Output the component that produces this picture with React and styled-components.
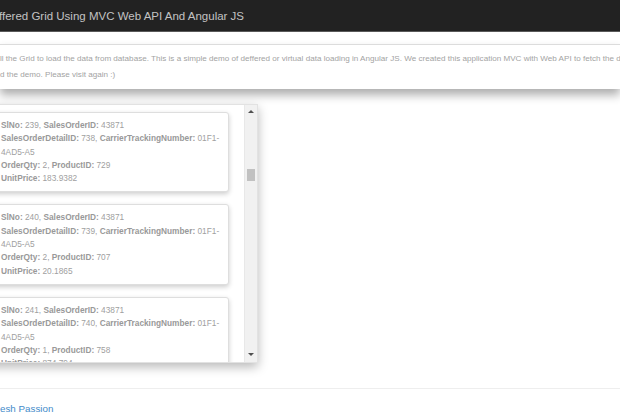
import styled, { createGlobalStyle } from 'styled-components';

const records = [
  { slNo: 239, orderId: 43871, detailId: 738, tracking: '01F1-4AD5-A5', qty: 2, productId: 729, price: '183.9382' },
  { slNo: 240, orderId: 43871, detailId: 739, tracking: '01F1-4AD5-A5', qty: 2, productId: 707, price: '20.1865' },
  { slNo: 241, orderId: 43871, detailId: 740, tracking: '01F1-4AD5-A5', qty: 1, productId: 758, price: '874.794' },
];

export default function App() {
  return (
    <>
      <GlobalStyle />
      <Navbar>
        <Brand>ffered Grid Using MVC Web API And Angular JS</Brand>
      </Navbar>
      <Main>
        <Intro>
          <IntroLine>
            ll the Grid to load the data from database. This is a simple demo of deffered or virtual data loading in
            Angular JS. We created this application MVC with Web API to fetch the data.
          </IntroLine>
          <IntroLine>d the demo. Please visit again :)</IntroLine>
        </Intro>
        <ScrollBox>
          <CardList>
            {records.map(r => (
              <Card key={r.slNo}>
                <b>SlNo:</b> {r.slNo}, <b>SalesOrderID:</b> {r.orderId}
                <br />
                <b>SalesOrderDetailID:</b> {r.detailId}, <b>CarrierTrackingNumber:</b> {r.tracking}
                <br />
                <b>OrderQty:</b> {r.qty}, <b>ProductID:</b> {r.productId}
                <br />
                <b>UnitPrice:</b> {r.price}
              </Card>
            ))}
          </CardList>
          <Scrollbar>
            <Arrow />
            <Thumb />
            <Arrow $down />
          </Scrollbar>
        </ScrollBox>
        <Footer>
          <FooterLink href="#">esh Passion</FooterLink>
        </Footer>
      </Main>
    </>
  );
}

const GlobalStyle = createGlobalStyle`
  body {
    margin: 0;
    overflow: hidden;
    background: #fff;
    font-family: "Liberation Sans", Arial, sans-serif;
  }
`;

const Navbar = styled.div`
  height: 31px;
  background: #222;
  border-bottom: 1px solid #5a5a5a;
  display: flex;
  align-items: center;
  overflow: hidden;
`;

const Brand = styled.span`
  font-size: 11.5px;
  color: #c2c2c2;
  white-space: nowrap;
  margin-left: -1px;
`;

const Main = styled.div`
  padding-top: 12px;
`;

const Intro = styled.div`
  border-top: 1px solid #dcdcdc;
  padding: 6px 0;
  background: #fff;
  box-shadow: 0 6px 9px rgba(0, 0, 0, 0.32);
  overflow: hidden;
`;

const IntroLine = styled.div`
  font-size: 8.1px;
  line-height: 16px;
  color: #a3a3a3;
  white-space: nowrap;
`;

const ScrollBox = styled.div`
  margin-top: 15px;
  margin-left: -24px;
  width: 281px;
  height: 257px;
  display: flex;
  border: 1px solid #e2e2e2;
  border-left: none;
  background: #fff;
  box-shadow: 0 4px 10px rgba(0, 0, 0, 0.28);
`;

const CardList = styled.div`
  flex: 1;
  overflow: hidden;
  padding: 7px 15px 0 16px;
`;

const Card = styled.div`
  background: #fff;
  border: 1px solid #dedede;
  border-radius: 3px;
  box-shadow: 0 2px 5px rgba(0, 0, 0, 0.2);
  padding: 6px 5px 6px 8px;
  margin-bottom: 12px;
  font-size: 8.3px;
  line-height: 13.3px;
  color: #a0a0a0;

  b {
    color: #999;
  }
`;

const Scrollbar = styled.div`
  width: 12px;
  background: #f1f1f1;
  border-left: 1px solid #e8e8e8;
  display: flex;
  flex-direction: column;
  align-items: center;
  padding: 5px 0 6px;
`;

const Arrow = styled.div`
  width: 0;
  height: 0;
  border-left: 3px solid transparent;
  border-right: 3px solid transparent;
  ${p => (p.$down ? 'border-top: 3px solid #505050; margin-top: auto;' : 'border-bottom: 3px solid #505050;')}
`;

const Thumb = styled.div`
  width: 8px;
  height: 12px;
  background: #c1c1c1;
  margin-top: 56px;
`;

const Footer = styled.div`
  margin-top: 25px;
  border-top: 1px solid #eee;
  padding-top: 9px;
`;

const FooterLink = styled.a`
  font-size: 9.8px;
  color: #428bca;
  text-decoration: none;
`;
